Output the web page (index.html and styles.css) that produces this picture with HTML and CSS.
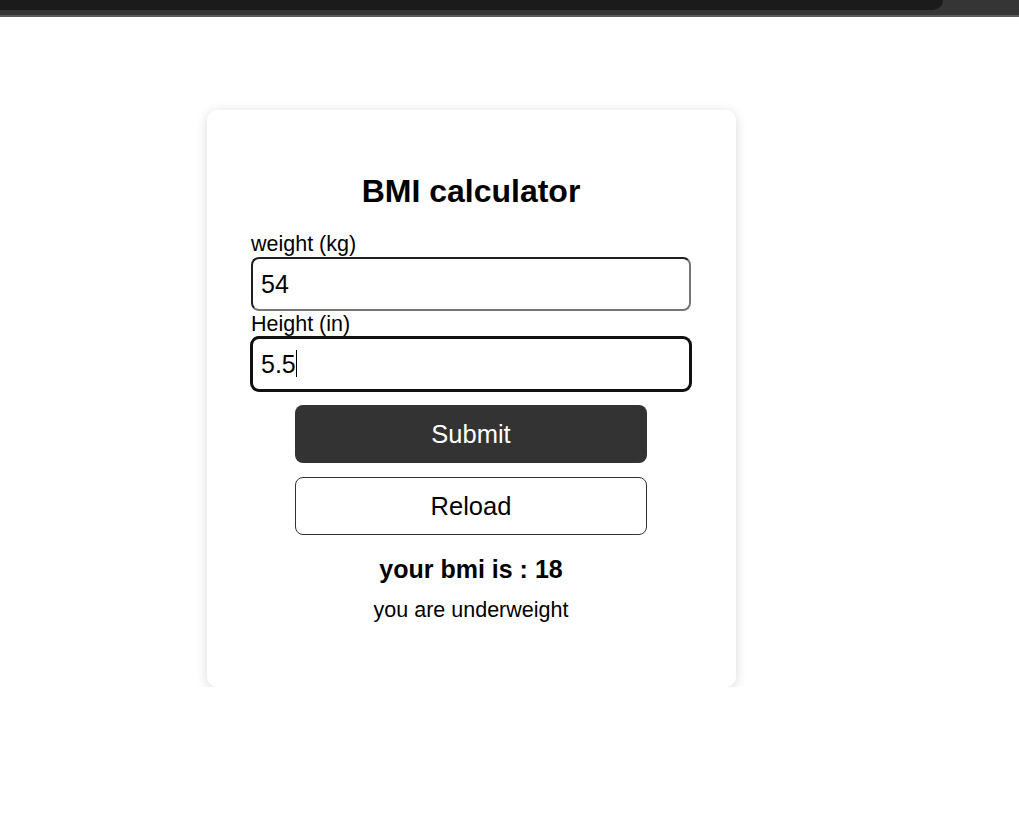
FILE: index.html
```html
<!DOCTYPE html>
<html lang="en">
<head>
<meta charset="utf-8">
<title>BMI calculator</title>
<link rel="stylesheet" href="styles.css">
</head>
<body>
  <div class="chrome">
    <div class="chrome-tab"></div>
  </div>
  <div class="chrome-line"></div>

  <main class="card">
    <h1 class="title">BMI calculator</h1>
    <form class="form">
      <label class="label" for="weight">weight (kg)</label>
      <div class="field-wrap">
        <input class="field" id="weight" type="text" value="54">
      </div>
      <label class="label" for="height">Height (in)</label>
      <div class="field-wrap">
        <input class="field field-focus" id="height" type="text" value="5.5">
        <span class="caret"></span>
      </div>
      <button class="btn btn-submit" type="button">Submit</button>
      <button class="btn btn-reload" type="button">Reload</button>
    </form>
    <p class="result">your bmi is : 18</p>
    <p class="message">you are underweight</p>
  </main>
</body>
</html>
```

FILE: styles.css
```css
html, body {
  margin: 0;
  padding: 0;
  background: #ffffff;
}

body {
  font-family: "Liberation Sans", Arial, sans-serif;
  color: #000;
}

.chrome {
  height: 15px;
  background: #353535;
}

.chrome-tab {
  width: 943px;
  height: 10px;
  background: #1b1b1b;
  border-bottom-right-radius: 10px;
}

.chrome-line {
  height: 2px;
  background: #5a5a5a;
}

.card {
  box-sizing: border-box;
  width: 529px;
  margin: 93px 0 0 207px;
  padding: 63px 45px 64px 44px;
  background: #fff;
  border-radius: 10px;
  box-shadow: 0 2px 12px rgba(0, 0, 0, 0.15);
  display: flex;
  flex-direction: column;
}

.title {
  margin: 0 0 22px;
  font-size: 32px;
  line-height: 37px;
  font-weight: bold;
  text-align: center;
}

.form {
  display: flex;
  flex-direction: column;
  margin: 0;
}

.label {
  display: block;
  font-size: 21.5px;
  line-height: 25px;
}

.field-wrap {
  position: relative;
  margin-bottom: 1px;
}

.field {
  display: block;
  box-sizing: border-box;
  width: 100%;
  height: 54px;
  margin: 0;
  padding: 0 8px;
  font-family: "Liberation Sans", Arial, sans-serif;
  font-size: 25px;
  color: #000;
  background: #fff;
  border: 2px solid;
  border-color: #1f1f1f #767676 #767676 #1f1f1f;
  border-radius: 8px;
  outline: none;
}

.field-focus {
  border: 2px solid #111;
  box-shadow: 0 0 0 1px #111;
}

.caret {
  position: absolute;
  left: 45px;
  top: 13px;
  width: 1px;
  height: 27px;
  background: #000;
}

.btn {
  box-sizing: border-box;
  align-self: center;
  width: 80%;
  height: 58px;
  margin-top: 13px;
  font-family: "Liberation Sans", Arial, sans-serif;
  font-size: 25.5px;
  border-radius: 8px;
  cursor: pointer;
}

.btn-submit {
  background: #333333;
  color: #fff;
  border: none;
}

.btn-reload {
  margin-top: 14px;
  background: #fff;
  color: #000;
  border: 1px solid #333;
}

.result {
  margin: 20px 0 0;
  font-size: 25px;
  line-height: 29px;
  font-weight: bold;
  text-align: center;
}

.message {
  margin: 14px 0 0;
  font-size: 21.5px;
  line-height: 25px;
  text-align: center;
}
```
